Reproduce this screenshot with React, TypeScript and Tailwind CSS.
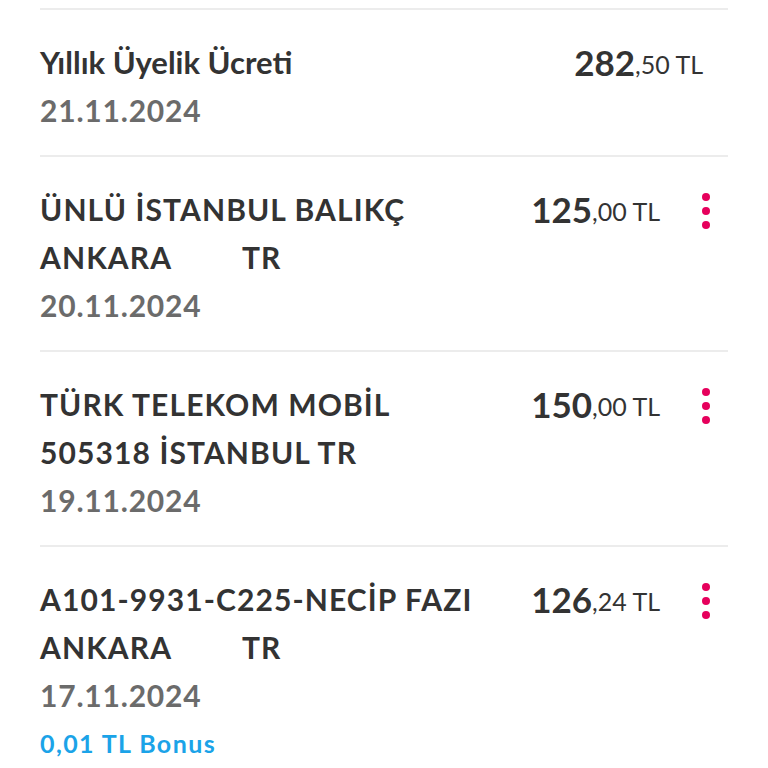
import { useState } from "react";

type Tx = {
  lines: string[][];
  date: string;
  whole: string;
  cents: string;
  menu: boolean;
  bonus?: string;
};

const items: Tx[] = [
  { lines: [["Yıllık Üyelik Ücreti"]], date: "21.11.2024", whole: "282", cents: ",50 TL", menu: false },
  {
    lines: [["ÜNLÜ İSTANBUL BALIKÇ"], ["ANKARA", "TR"]],
    date: "20.11.2024",
    whole: "125",
    cents: ",00 TL",
    menu: true,
  },
  {
    lines: [["TÜRK TELEKOM MOBİL"], ["505318 İSTANBUL TR"]],
    date: "19.11.2024",
    whole: "150",
    cents: ",00 TL",
    menu: true,
  },
  {
    lines: [["A101-9931-C225-NECİP FAZI"], ["ANKARA", "TR"]],
    date: "17.11.2024",
    whole: "126",
    cents: ",24 TL",
    menu: true,
    bonus: "0,01 TL Bonus",
  },
];

function Dots() {
  return (
    <div className="flex flex-col items-center gap-[6px] pt-[8px]">
      <span className="w-[8px] h-[8px] rounded-full bg-[#e6005c]" />
      <span className="w-[8px] h-[8px] rounded-full bg-[#e6005c]" />
      <span className="w-[8px] h-[8px] rounded-full bg-[#e6005c]" />
    </div>
  );
}

export default function App() {
  const [open, setOpen] = useState<number | null>(null);

  return (
    <main className="w-[768px] h-[768px] overflow-hidden bg-white font-['Lato','Noto_Sans',sans-serif]">
      <div className="mx-10 pt-2">
        {items.map((tx, i) => (
          <div key={i} className="border-t-2 border-[#ececec] flex pt-[28px] pb-[21px]">
            <div className="flex-1">
              {tx.lines.map((l, j) =>
                i === 0 ? (
                  <div key={j} className="text-[31px] leading-[48px] font-bold text-[#333]">
                    {l[0]}
                  </div>
                ) : (
                  <div key={j} className="text-[30px] leading-[48px] font-bold text-[#333] tracking-[1.1px]">
                    {l.length > 1 ? (
                      <>
                        <span className="inline-block w-[202px]">{l[0]}</span>
                        {l[1]}
                      </>
                    ) : (
                      l[0]
                    )}
                  </div>
                )
              )}
              <div className="text-[30px] leading-[48px] font-bold text-[#6b6b6b] tracking-[0.8px]">{tx.date}</div>
              {tx.bonus && (
                <div className="text-[25px] leading-[48px] font-bold text-[#1ba3e8] tracking-[1.4px]">{tx.bonus}</div>
              )}
            </div>
            <div className={`flex items-start ${tx.menu ? "" : "pr-[25px]"}`}>
              <div className="h-[48px] flex items-center text-[#333]">
                <span className="text-[35px] font-bold">{tx.whole}</span>
                <span className="text-[25px] mt-[6px]">{tx.cents}</span>
              </div>
              {tx.menu && (
                <button onClick={() => setOpen(open === i ? null : i)} className="ml-[42px] w-[8px] mr-[18px]">
                  <Dots />
                </button>
              )}
            </div>
          </div>
        ))}
      </div>
    </main>
  );
}
